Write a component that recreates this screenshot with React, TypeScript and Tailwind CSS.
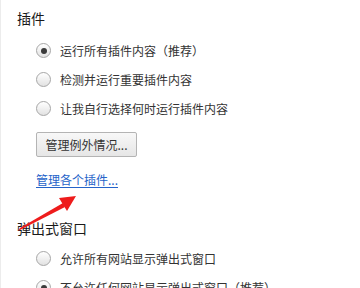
import React from "react";

const font = { fontFamily: '"Microsoft YaHei", "Noto Sans CJK SC", "Noto Sans", sans-serif' };

function Radio({ checked, label }: { checked?: boolean; label: string }) {
  return (
    <div className="flex items-center h-[29px]">
      <span className="w-[15px] h-[15px] rounded-full border border-[#a6a6a6] bg-gradient-to-b from-[#ffffff] to-[#e2e2e2] flex items-center justify-center shrink-0">
        {checked && <span className="w-[6px] h-[6px] rounded-full bg-[#3a3a3a]" />}
      </span>
      <span className="ml-[9px] text-[12px] leading-[29px] text-[#333333] whitespace-nowrap">{label}</span>
    </div>
  );
}

export default function App() {
  return (
    <div className="relative w-[360px] h-[288px] overflow-hidden bg-white border-l border-[#ececec]" style={font}>
      <div className="pl-[16px] pt-[8px]">
        <h3 className="text-[14px] leading-[20px] text-[#1a1a1a] font-normal">插件</h3>
        <div className="ml-[19px] mt-[8px]">
          <Radio checked label="运行所有插件内容（推荐）" />
          <Radio label="检测并运行重要插件内容" />
          <Radio label="让我自行选择何时运行插件内容" />
          <button className="mt-[9px] h-[25px] w-[101px] rounded-[2px] border border-[#b4b4b4] bg-gradient-to-b from-[#f8f8f8] to-[#e6e6e6] text-[12px] text-[#333333] flex items-center justify-center">
            管理例外情况...
          </button>
          <a className="block mt-[13px] text-[12px] leading-[20px] text-[#2563c9] underline underline-offset-2 w-fit">
            管理各个插件...
          </a>
        </div>
        <h3 className="mt-[28px] text-[14px] leading-[20px] text-[#1a1a1a] font-normal">弹出式窗口</h3>
        <div className="ml-[19px] mt-[6px]">
          <Radio label="允许所有网站显示弹出式窗口" />
          <Radio checked label="不允许任何网站显示弹出式窗口（推荐）" />
        </div>
      </div>
      <svg className="absolute left-0 top-0" width="360" height="288" viewBox="0 0 360 288">
        <polygon points="17,231 19,228 62,203 64,207" fill="#ee1c1c" />
        <polygon points="75,196 58,198 66,211" fill="#ee1c1c" />
      </svg>
    </div>
  );
}
